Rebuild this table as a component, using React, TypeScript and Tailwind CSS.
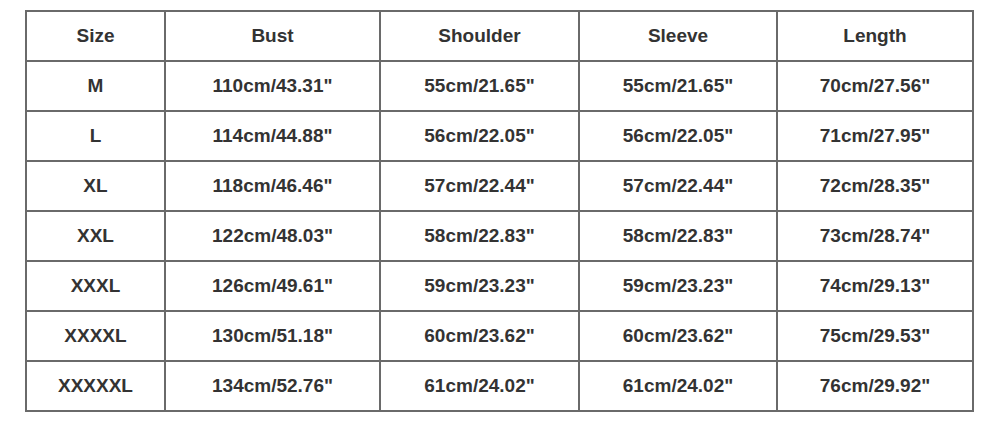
import React from 'react';

const HEADERS = ['Size', 'Bust', 'Shoulder', 'Sleeve', 'Length'];

const ROWS: string[][] = [
  ['M', '110cm/43.31"', '55cm/21.65"', '55cm/21.65"', '70cm/27.56"'],
  ['L', '114cm/44.88"', '56cm/22.05"', '56cm/22.05"', '71cm/27.95"'],
  ['XL', '118cm/46.46"', '57cm/22.44"', '57cm/22.44"', '72cm/28.35"'],
  ['XXL', '122cm/48.03"', '58cm/22.83"', '58cm/22.83"', '73cm/28.74"'],
  ['XXXL', '126cm/49.61"', '59cm/23.23"', '59cm/23.23"', '74cm/29.13"'],
  ['XXXXL', '130cm/51.18"', '60cm/23.62"', '60cm/23.62"', '75cm/29.53"'],
  ['XXXXXL', '134cm/52.76"', '61cm/24.02"', '61cm/24.02"', '76cm/29.92"'],
];

export default function App() {
  return (
    <div className="w-[1000px] h-[421px] bg-white pl-[25px] pt-[10px] font-['Liberation_Sans',Arial,sans-serif]">
      {/* Size chart */}
      <div className="grid w-[949px] grid-cols-[137px_213px_197px_196px_194px] auto-rows-[48px] gap-[2px] border-2 border-[#6a6a6a] bg-[#6a6a6a]">
        {[HEADERS, ...ROWS].map((row, i) =>
          row.map((cell, j) => (
            <div
              key={`${i}-${j}`}
              className="flex items-center justify-center bg-white text-[19px] font-bold text-[#333333]"
            >
              {cell}
            </div>
          ))
        )}
      </div>
    </div>
  );
}
